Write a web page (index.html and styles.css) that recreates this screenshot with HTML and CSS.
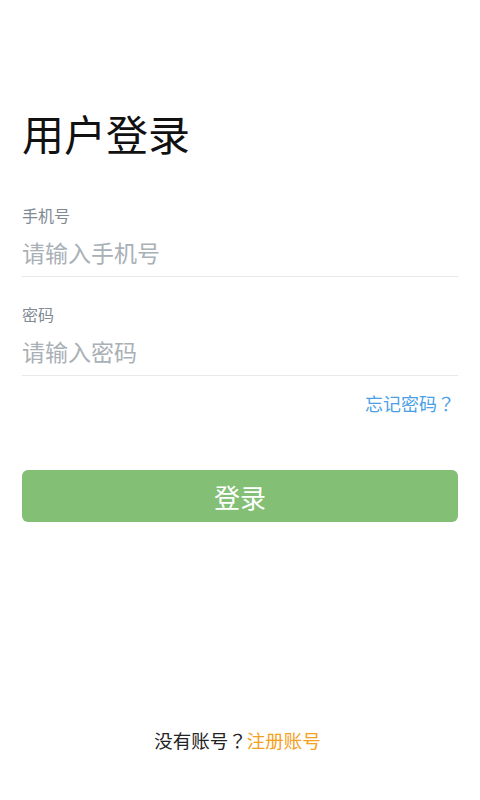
FILE: index.html
```html
<!DOCTYPE html>
<html lang="zh-CN">
<head>
<meta charset="utf-8">
<title>用户登录</title>
<link rel="stylesheet" href="styles.css">
</head>
<body>
<div class="page">
  <h1 class="title">用户登录</h1>
  <div class="field">
    <label class="label">手机号</label>
    <input class="input" type="text" placeholder="请输入手机号">
  </div>
  <div class="field field-pwd">
    <label class="label">密码</label>
    <input class="input" type="password" placeholder="请输入密码">
  </div>
  <div class="forgot-row"><a class="forgot">忘记密码<span class="qm" lang="ja">？</span></a></div>
  <button class="btn">登录</button>
  <div class="spacer"></div>
  <div class="register">没有账号<span class="qm" lang="ja">？</span><a class="reg-link">注册账号</a></div>
</div>
</body>
</html>
```
FILE: styles.css
```css
* { box-sizing: border-box; }
html, body { margin: 0; padding: 0; background: #fff; }
body { font-family: "Noto Sans CJK SC", "Noto Sans", sans-serif; }
.page {
  display: flex;
  flex-direction: column;
  height: 800px;
  padding: 0 22px;
}
.title {
  margin: 109px 0 0;
  font-size: 42px;
  line-height: 48px;
  font-weight: 400;
  color: #111;
}
.field { display: flex; flex-direction: column; margin-top: 49px; }
.field-pwd { margin-top: 28px; }
.label {
  font-size: 16px;
  line-height: 18px;
  color: #7f8a95;
}
.input {
  border: none;
  border-bottom: 1px solid #e6e8ea;
  outline: none;
  padding: 0 0 4px;
  margin-top: 7px;
  height: 46px;
  font-family: inherit;
  font-size: 23px;
  color: #333;
  background: transparent;
}
.input::placeholder { color: #a9b0b6; }
.qm { font-family: "Noto Sans CJK JP", "Noto Sans CJK SC", sans-serif; }
.forgot-row { display: flex; justify-content: flex-end; margin-top: 15px; }
.forgot {
  font-size: 18px;
  line-height: 24px;
  color: #4a9fe6;
  margin-right: 3px;
}
.btn {
  margin-top: 55px;
  height: 52px;
  border: none;
  border-radius: 6px;
  background: #84bf76;
  color: #fff;
  font-family: inherit;
  font-size: 26px;
}
.spacer { flex: 1; }
.register {
  text-align: center;
  font-size: 18.5px;
  line-height: 24px;
  color: #222;
  margin-bottom: 48px;
  padding-right: 5px;
}
.reg-link { color: #f4a020; }
```
